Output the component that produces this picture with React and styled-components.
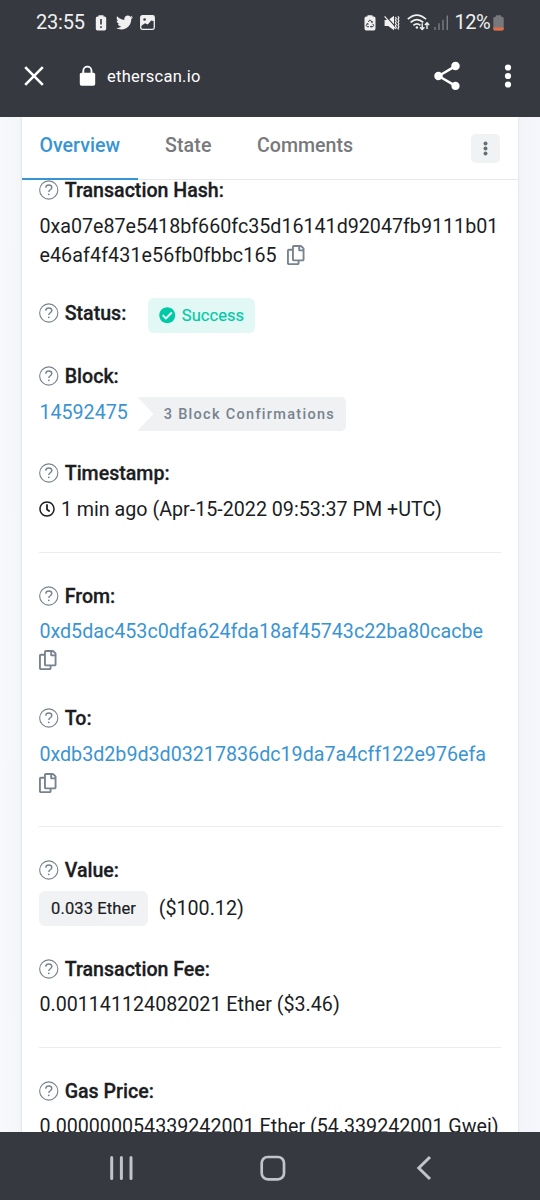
import React from "react";
import styled, { createGlobalStyle } from "styled-components";
import { FaTwitter, FaRegCopy, FaCheckCircle, FaRegClock } from "react-icons/fa";
import { MdShare } from "react-icons/md";

const GlobalStyle = createGlobalStyle`
  *, *::before, *::after { box-sizing: border-box; }
  body { margin: 0; background: #f6f7fb; }
  svg { display: block; flex: none; }
`;

const Screen = styled.div`
  display: flex;
  flex-direction: column;
  width: 540px;
  height: 1200px;
  overflow: hidden;
  font-family: Roboto, "Liberation Sans", sans-serif;
  font-size: 19.68px;
  color: #1b1d1f;
  white-space: nowrap;
`;

const TopArea = styled.header`
  flex: none;
  height: 117px;
  background: #373940;
  color: #fff;
`;

const StatusBar = styled.div`
  display: flex;
  align-items: center;
  justify-content: space-between;
  height: 45px;
  padding: 0 36px 0 36px;
  color: #f0f0f1;
`;

const StatusGroup = styled.div`
  display: flex;
  align-items: center;
  height: 45px;
`;

const StatusText = styled.span`
  width: ${(p) => p.$width}px;
  padding-bottom: 1px;
  font-size: 20px;
  line-height: 24px;
  letter-spacing: ${(p) => p.$spacing || 0}px;
`;

const Gap = styled.span`
  width: ${(p) => p.$size}px;
  flex: none;
`;

const AddressBar = styled.div`
  display: flex;
  align-items: center;
  height: 62px;
  padding: 0 28px 0 24px;
`;

const Host = styled.span`
  flex: 1;
  margin-left: 11px;
  padding-top: 2px;
  font-size: 16.5px;
  line-height: 22px;
  letter-spacing: 0.25px;
`;

const Page = styled.main`
  flex: 1;
  min-height: 0;
  overflow: hidden;
  padding: 0 22px;
  background: linear-gradient(90deg, #f8f9fb 0, #f3f5f8 22px, #f3f4f8 518px, #f6f7fc 540px);
`;

const Card = styled.section`
  height: 1040px;
  background: #fff;
  box-shadow: 0 0 2px rgba(60, 70, 90, 0.2);
`;

const Tabs = styled.nav`
  display: flex;
  height: 63px;
  border-bottom: 1px solid #e4e7eb;
`;

const Tab = styled.span`
  height: 63px;
  width: ${(p) => p.$width}px;
  padding: 16px 0 0 17.5px;
  font-size: 19.6px;
  line-height: 25px;
  font-weight: 500;
  letter-spacing: ${(p) => p.$spacing || 0}px;
  color: ${(p) => (p.$active ? "#3795d4" : "#77797c")};
  border-bottom: ${(p) => (p.$active ? "2.5px solid #3795d4" : "0")};
`;

const MoreButton = styled.span`
  display: flex;
  align-items: center;
  justify-content: center;
  width: 29px;
  height: 29px;
  margin: 16.5px 18px 0 auto;
  border-radius: 5px;
  background: #f1f2f4;
`;

const Body = styled.div`
  padding: 0 17px 0 17.4px;
`;

const Field = styled.div`
  margin-bottom: ${(p) => p.$after}px;
`;

const Label = styled.div`
  display: flex;
  align-items: center;
  gap: 5.8px;
  height: 20px;
  font-size: 19.6px;
  font-weight: 500;
  -webkit-text-stroke: 0.3px currentColor;
  svg { -webkit-text-stroke: 0; }
`;

const LabelText = styled.span`
  height: 20px;
  line-height: 22px;
`;

const Line = styled.div`
  display: flex;
  align-items: center;
  height: 29.25px;
  gap: ${(p) => p.$gap || 0}px;
  letter-spacing: ${(p) => p.$spacing || 0}px;
  color: ${(p) => (p.$link ? "#3b94d2" : "inherit")};
`;

const Value = styled.div`
  margin-top: ${(p) => p.$top || 11}px;
`;

const StatusRow = styled.div`
  display: flex;
  align-items: flex-start;
  height: 35px;
  gap: 21.5px;
  & > ${Label} { margin-top: 5px; }
`;

const SuccessBadge = styled.span`
  display: flex;
  align-items: center;
  gap: 6px;
  width: 107.5px;
  height: 34.5px;
  padding: 0 0 0 11.5px;
  border-radius: 6px;
  background: #e2f8f4;
  color: #00c9a7;
  font-size: 16.5px;
  letter-spacing: 0.05px;
  -webkit-text-stroke: 0.2px currentColor;
  svg { -webkit-text-stroke: 0; }
`;

const BlockRow = styled.div`
  display: flex;
  height: 34px;
  margin-top: 11px;
`;

const BlockNumber = styled.span`
  width: 98px;
  line-height: 31px;
  color: #3b94d2;
`;

const Confirmations = styled.span`
  width: 209px;
  height: 34px;
  padding-left: 26.3px;
  border-radius: 0 5px 5px 0;
  background: #f0f1f3;
  clip-path: polygon(0 0, 100% 0, 100% 100%, 0 100%, 16px 50%);
  color: #77838f;
  font-size: 14.5px;
  font-weight: 500;
  line-height: 35.5px;
  letter-spacing: 1.3px;
`;

const AmountRow = styled.div`
  display: flex;
  align-items: center;
  gap: 11px;
  height: 35px;
  margin-top: 11px;
`;

const Amount = styled.span`
  width: 108.3px;
  height: 35px;
  border-radius: 6px;
  background: #f1f2f4;
  font-size: 16.5px;
  line-height: 35px;
  text-align: center;
  letter-spacing: 0.1px;
  -webkit-text-stroke: 0.2px currentColor;
`;

const Divider = styled.div`
  height: 1px;
  background: #e9ecf0;
  margin-bottom: 33px;
`;

const NavBar = styled.footer`
  flex: none;
  display: flex;
  align-items: center;
  height: 68px;
  padding: 4px 0 0 109px;
  background: #373940;
`;

const Copy = styled(FaRegCopy)`
  width: 17.5px;
  height: 20px;
  margin-bottom: 2px;
  color: #77838f;
`;

const HelpIcon = () => (
  <svg width="19.5" height="20" viewBox="0 0 19.5 20" fill="none">
    <circle cx="9.75" cy="10" r="9.1" stroke="#77838f" strokeWidth="1.1" />
    <path d="M6.8 7.7C6.8 6 8 5 9.8 5s3 1 3 2.6c0 2.2-3 2.2-3 4.4" stroke="#77838f" strokeWidth="1.4" />
    <circle cx="9.8" cy="14.3" r="0.9" fill="#77838f" />
  </svg>
);

const LockIcon = () => (
  <svg width="17" height="22" viewBox="0 0 17 22">
    <path d="M4.3 9V5.7a4.1 4.1 0 0 1 8.2 0V9" fill="none" stroke="#fff" strokeWidth="1.9" />
    <rect x="0.8" y="7.8" width="15.4" height="13" rx="1.7" fill="#fff" />
  </svg>
);

const AlertBattery = () => (
  <svg width="12" height="16" viewBox="0 0 12 16">
    <path d="M3.5 1.5V.3h5v1.2h1q1.7 0 1.7 1.7v10.6q0 1.7-1.7 1.7h-7q-1.7 0-1.7-1.7V3.2q0-1.7 1.7-1.7z" fill="#f0f0f1" />
    <path d="M6 4v5.5M6 11.3v1.7" stroke="#373940" strokeWidth="1.6" />
  </svg>
);

const PictureIcon = () => (
  <svg width="15" height="15" viewBox="0 0 15 15">
    <rect x=".7" y=".7" width="13.6" height="13.6" rx="1.7" fill="#373940" stroke="#f0f0f1" strokeWidth="1.3" />
    <path d="M1 1h13v5.2L11.2 5.5 7.8 9.5 5 8.2 1 11z" fill="#f0f0f1" />
    <circle cx="4.6" cy="4.5" r="1.3" fill="#373940" />
    <path d="M2 12.5 5 9.5l3 1.4L11.4 7 13 8.5v4z" fill="#373940" />
  </svg>
);

const SaverBattery = () => (
  <svg width="12" height="16" viewBox="0 0 12 16">
    <path d="M3.5 1.5V.2h5v1.3h1.2q1.8 0 1.8 1.8v10.3q0 1.9-1.8 1.9H2.3q-1.8 0-1.8-1.9V3.3q0-1.8 1.8-1.8z" fill="#f0f0f1" />
    <path d="m4.4 7 1.1-1.8h1L8 7.4M8.8 8.9l.8 1.6-.7 1.2H6.7M5 11.7H3.1l-.8-1.2 1.1-2" fill="none" stroke="#373940" strokeWidth="1" />
    <path d="m8.8 6-.2 2-1.8-.8zM7.3 10.4v2.4L5.9 11.7zM2.3 8.8l1.9-.8.3 1.9z" fill="#373940" />
  </svg>
);

const MuteIcon = () => (
  <svg width="16" height="16" viewBox="0 0 16 16">
    <path d="M.6 5h3.6L10 .8v14.4L4.2 11H.6z" fill="#f0f0f1" />
    <path d="m1 .2 11 12.3" stroke="#373940" strokeWidth="1.2" />
    <path d="m.6 1.4 10.5 12" stroke="#f0f0f1" strokeWidth="1.2" />
    <path d="m11.4 2 .9 1.5-.9 1.5.9 1.5-.9 1.5.9 1.5-.9 1.5.9 1.5-.9 1.5M14 1.2l.9 1.5L14 4.2l.9 1.5-.9 1.5.9 1.5-.9 1.5.9 1.5-.9 1.5.6 1.2" fill="none" stroke="#f0f0f1" strokeWidth="1.2" />
  </svg>
);

const WifiIcon = () => (
  <svg width="23" height="17" viewBox="0 0 23 17" fill="none" stroke="#f0f0f1">
    <path d="M.8 5.2Q9.8-3 19 5.2M3.6 8.4Q9.8 2.7 16.3 8.4M6.4 11.3q3.5-3 7 0" strokeWidth="1.7" />
    <circle cx="9.9" cy="13.5" r="1.2" fill="#f0f0f1" stroke="none" />
    <path d="M15.2 9.3v6M13 13.3l2.2 2.3 2.2-2.3M20 15v-6M17.9 11 20 8.7l2.1 2.3" strokeWidth="1.4" />
  </svg>
);

const SignalIcon = () => (
  <svg width="15" height="15" viewBox="0 0 15 15">
    <path d="M1 12v3M5 8.2V15M9 4.8V15M13.3.5V15" stroke="#7c7d82" strokeWidth="1.4" />
  </svg>
);

const ChargeBattery = () => (
  <svg width="11" height="16" viewBox="0 0 11 16">
    <path d="M3 1.8V.3h5v1.5h1.2q1.5 0 1.5 1.5v10.5q0 1.7-1.5 1.7H1.8Q.3 15.5.3 13.8V3.3q0-1.5 1.5-1.5z" fill="#76787b" />
    <path d="M.3 12.6h10.4v1.2q0 1.7-1.5 1.7H1.8Q.3 15.5.3 13.8z" fill="#e66b42" />
  </svg>
);

const CloseIcon = () => (
  <svg width="20" height="20" viewBox="0 0 20 20">
    <path d="m1.2 1.2 17.6 17.6M18.8 1.2 1.2 18.8" stroke="#fff" strokeWidth="2.6" />
  </svg>
);

const DotsIcon = ({ width, height, r, color, inset }) => (
  <svg width={width} height={height} viewBox={`0 0 ${width} ${height}`} fill={color}>
    <circle cx={width / 2} cy={inset} r={r} />
    <circle cx={width / 2} cy={height / 2} r={r} />
    <circle cx={width / 2} cy={height - inset} r={r} />
  </svg>
);

const FieldLabel = ({ children }) => (
  <Label>
    <HelpIcon />
    <LabelText>{children}</LabelText>
  </Label>
);

export default function App() {
  return (
    <Screen>
      <GlobalStyle />
      <TopArea>
        <StatusBar>
          <StatusGroup>
            <StatusText $width={58.5} $spacing={-0.2}>23:55</StatusText>
            <AlertBattery />
            <Gap $size={9} />
            <FaTwitter size={17} />
            <Gap $size={7} />
            <PictureIcon />
          </StatusGroup>
          <StatusGroup>
            <SaverBattery />
            <Gap $size={8} />
            <MuteIcon />
            <Gap $size={6.5} />
            <WifiIcon />
            <Gap $size={4} />
            <SignalIcon />
            <Gap $size={6} />
            <StatusText $width={38.5} $spacing={-0.5}>12%</StatusText>
            <ChargeBattery />
          </StatusGroup>
        </StatusBar>
        <AddressBar>
          <CloseIcon />
          <Gap $size={35} />
          <LockIcon />
          <Host>etherscan.io</Host>
          <MdShare size={34} />
          <Gap $size={40} />
          <DotsIcon width={8} height={24} r={3.1} inset={3.5} color="#fff" />
        </AddressBar>
      </TopArea>

      <Page>
        <Card>
          <Tabs>
            <Tab $active $width={115.5}>Overview</Tab>
            <Gap $size={10} />
            <Tab $width={92} $spacing={0.1}>State</Tab>
            <Tab $width={130}>Comments</Tab>
            <MoreButton>
              <DotsIcon width={5} height={15} r={2} inset={2.5} color="#66707b" />
            </MoreButton>
          </Tabs>
          <Body>
            <Field $after={27.5}>
              <FieldLabel>Transaction Hash:</FieldLabel>
              <Value $top={12}>
                <Line>0xa07e87e5418bf660fc35d16141d92047fb9111b01</Line>
                <Line $gap={10.5} $spacing={0.1}>
                  <span>e46af4f431e56fb0fbbc165</span>
                  <Copy />
                </Line>
              </Value>
            </Field>
            <Field $after={33}>
              <StatusRow>
                <FieldLabel>Status:</FieldLabel>
                <SuccessBadge>
                  <FaCheckCircle size={16.5} />
                  <span>Success</span>
                </SuccessBadge>
              </StatusRow>
            </Field>
            <Field $after={32}>
              <FieldLabel>Block:</FieldLabel>
              <BlockRow>
                <BlockNumber>14592475</BlockNumber>
                <Confirmations>3 Block Confirmations</Confirmations>
              </BlockRow>
            </Field>
            <Field $after={28}>
              <FieldLabel>Timestamp:</FieldLabel>
              <Value $top={11.5}>
                <Line $gap={5.5}>
                  <FaRegClock size={16} />
                  <span>1 min ago (Apr-15-2022 09:53:37 PM +UTC)</span>
                </Line>
              </Value>
            </Field>
            <Divider />
            <Field $after={33}>
              <FieldLabel>From:</FieldLabel>
              <Value>
                <Line $link>0xd5dac453c0dfa624fda18af45743c22ba80cacbe</Line>
                <Line><Copy /></Line>
              </Value>
            </Field>
            <Field $after={28}>
              <FieldLabel>To:</FieldLabel>
              <Value $top={11.5}>
                <Line $link>0xdb3d2b9d3d03217836dc19da7a4cff122e976efa</Line>
                <Line><Copy /></Line>
              </Value>
            </Field>
            <Divider />
            <Field $after={32.5}>
              <FieldLabel>Value:</FieldLabel>
              <AmountRow>
                <Amount>0.033 Ether</Amount>
                <span>($100.12)</span>
              </AmountRow>
            </Field>
            <Field $after={28}>
              <FieldLabel>Transaction Fee:</FieldLabel>
              <Value>
                <Line>0.001141124082021 Ether ($3.46)</Line>
              </Value>
            </Field>
            <Divider />
            <Field $after={0}>
              <FieldLabel>Gas Price:</FieldLabel>
              <Value $top={10.5}>
                <Line>0.000000054339242001 Ether (54.339242001 Gwei)</Line>
              </Value>
            </Field>
          </Body>
        </Card>
      </Page>

      <NavBar>
        <svg width="25" height="26" viewBox="0 0 25 26" stroke="#c3c4ca" strokeWidth="3" strokeLinecap="round">
          <path d="M2.7 2.5v21M12.4 2.5v21M22 2.5v21" />
        </svg>
        <Gap $size={125.5} />
        <svg width="26" height="26" viewBox="0 0 26 26" fill="none" stroke="#c3c4ca" strokeWidth="2.7">
          <rect x="1.7" y="2" width="22.3" height="22.3" rx="6" />
        </svg>
        <Gap $size={130} />
        <svg width="16" height="26" viewBox="0 0 16 26" fill="none" stroke="#c3c4ca" strokeWidth="3">
          <path d="M14 2 2.8 13 14 24" />
        </svg>
      </NavBar>
    </Screen>
  );
}
